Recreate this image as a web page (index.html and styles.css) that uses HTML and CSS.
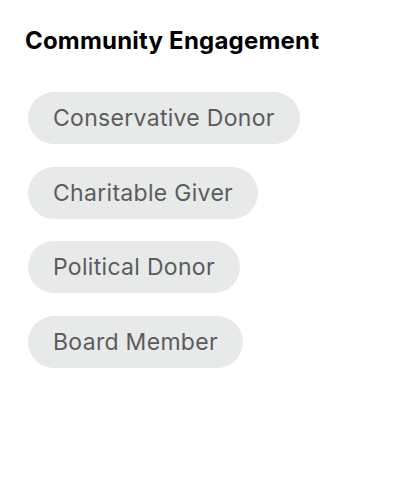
FILE: index.html
```html
<!DOCTYPE html>
<html lang="en">

<head>
    <meta charset="UTF-8">
    <meta name="viewport" content="width=device-width, initial-scale=1.0">
    <title>Community Engagement</title>

    <link rel="stylesheet" href="styles.css">
</head>

<body>

    <section class="engagement">
        <h2 class="engagement__title">Community Engagement</h2>
        <ul class="engagement__tags">
            <li class="tag">Conservative Donor</li>
            <li class="tag">Charitable Giver</li>
            <li class="tag">Political Donor</li>
            <li class="tag">Board Member</li>
        </ul>
    </section>

</body>

</html>
```

FILE: styles.css
```css
* {
    box-sizing: border-box;
}

body {
    margin: 0;
    background: #fff;
    font-family: Inter, "Liberation Sans", sans-serif;
}

.engagement {
    padding: 28px 25px;
}

.engagement__title {
    margin: 0;
    font-size: 24px;
    font-weight: 700;
    line-height: 26px;
    letter-spacing: 0.2px;
    color: #000;
}

.engagement__tags {
    display: flex;
    flex-direction: column;
    align-items: flex-start;
    gap: 22.5px;
    list-style-type: none;
    margin: 38px 0 0;
    padding: 0 0 0 3px;
}

.tag {
    display: flex;
    align-items: center;
    height: 52px;
    padding: 0 25px;
    border-radius: 26px;
    background: #e8e9e9;
    color: #5b5c5d;
    font-size: 23px;
    letter-spacing: 0.3px;
}
```
